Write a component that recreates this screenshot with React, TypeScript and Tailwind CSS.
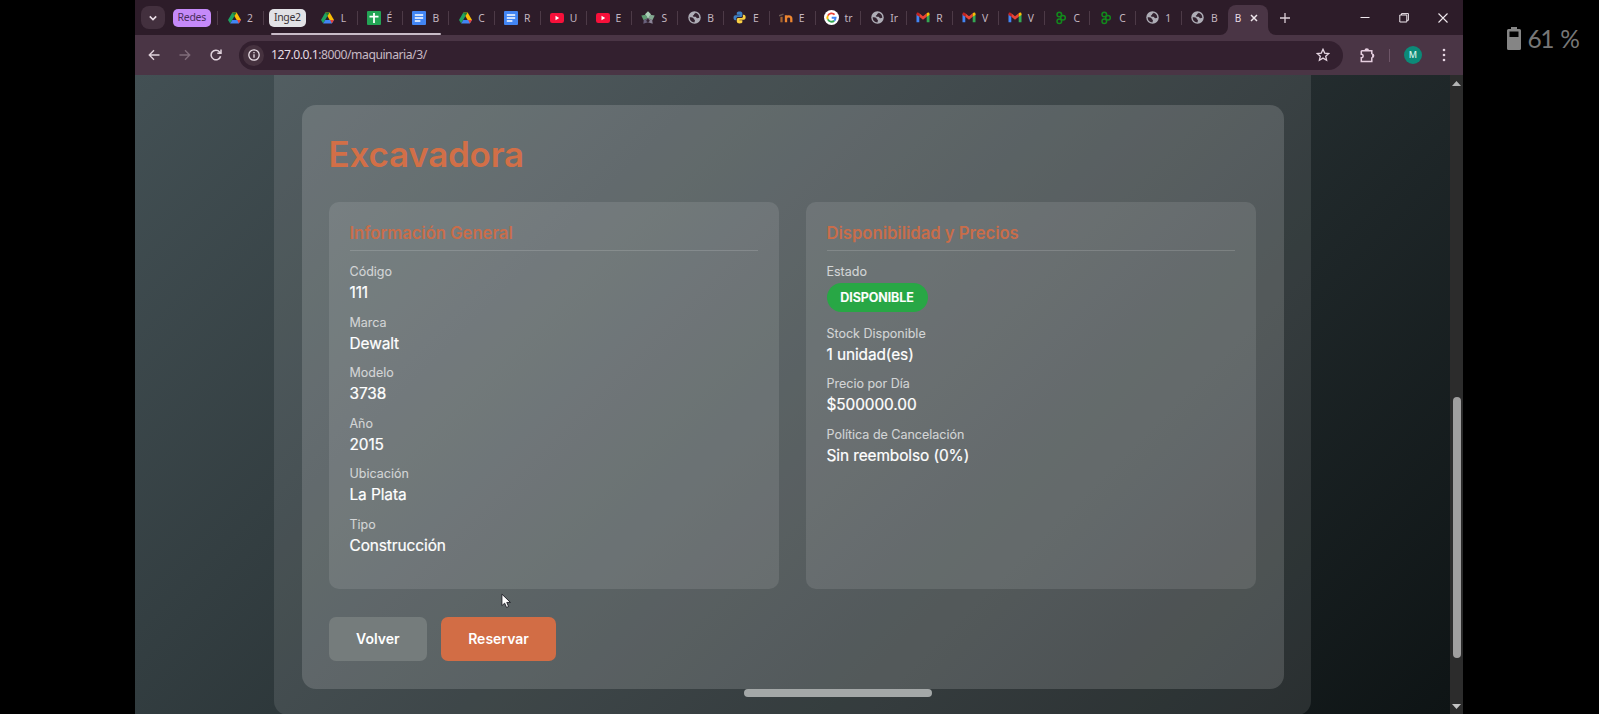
import React from "react";

type IconName =
  | "drive" | "sheets" | "docs" | "youtube" | "star" | "globe" | "python"
  | "moodle" | "google" | "gmail" | "knot";

function Favicon({ name }: { name: IconName }) {
  switch (name) {
    case "drive":
      return (
        <svg viewBox="0 0 24 22" className="h-[12px] w-[13px]">
          <path d="M8 1h8l8 13.5h-8z" fill="#fbbc04" />
          <path d="M8 1 0 14.500 4 21l8-13.500z" fill="#1ea362" />
          <path d="M8 14.500h16L20 21H4z" fill="#4285f4" />
          <path d="M24 14.500h-7L20 21z" fill="#ea4335" />
          <path d="M8 1h8l-4 6.500z" fill="#188038" />
        </svg>
      );
    case "sheets":
      return (
        <svg viewBox="0 0 14 14" className="h-[14px] w-[14px]">
          <rect width="14" height="14" rx="1" fill="#23a455" />
          <path d="M7 2v10M2.500 5.600h9" stroke="#fff" strokeWidth="1.800" />
        </svg>
      );
    case "docs":
      return (
        <svg viewBox="0 0 14 14" className="h-[14px] w-[14px]">
          <rect width="14" height="14" rx="1" fill="#4285f4" />
          <path d="M2.800 4h8.400M2.800 7h8.400M2.800 10h5.600" stroke="#fff" strokeWidth="1.400" />
        </svg>
      );
    case "youtube":
      return (
        <svg viewBox="0 0 14 10" className="h-[10px] w-[14px]">
          <rect width="14" height="10" rx="2.200" fill="#f8103a" />
          <path d="M5.500 2.800v4.400L9.200 5z" fill="#fff" />
        </svg>
      );
    case "star":
      return (
        <svg viewBox="0 0 14 14" className="h-[14px] w-[14px]">
          <path d="M7 .3 10 3.300 7.800 7H6.200L4 3.300z" fill="#a9cdb5" />
          <path d="M.3 4.600 4.800 3.800 6.800 7.200 2.600 9.300z" fill="#5f9a72" />
          <path d="M13.700 4.600 9.200 3.800 7.200 7.200l4.200 2.100z" fill="#82a890" />
          <path d="M2.300 12.800 2.800 9 7 7.200v4z" fill="#69617c" />
          <path d="M11.700 12.800 11.200 9 7 7.200v4z" fill="#8b8497" />
          <circle cx="7" cy="9.500" r="1.600" fill="#33222f" />
        </svg>
      );
    case "globe":
      return (
        <svg viewBox="0 0 14 14" className="h-[13px] w-[13px]">
          <circle cx="7" cy="7" r="6.700" fill="#aeadb6" />
          <path d="M1.800 6.800c1.800 0 4.200.2 4.400 1.600.1 1.200 1.300.6 1.300 1.900 0 .7-.6 1.200-.6 2-2.900 0-5.200-2.400-5.100-5.500zM8.300 2c-.2 1-1.800.8-1.800 1.800 0 .8-1.300.7-1.300 1.700 0 .9 1.600.7 2.800.7 1 0 .9 1.500 2 1.500.9 0 1.300-.5 2.200-.5C12 4.500 10.600 2.600 8.300 2z" fill="#33222f" />
        </svg>
      );
    case "python":
      return (
        <svg viewBox="0 0 24 24" className="h-[13px] w-[13px]">
          <path d="M12 1C7 1 7 3 7 4.500V7h5.500v1H4.500C2 8 1 10 1 12.500S2 17 4.500 17H6v-3c0-2 1.500-3 3.500-3h5c1.600 0 2.800-1.200 2.800-2.800V4.500C17.300 2 15 1 12 1z" fill="#3f7fc1" />
          <path d="M12.300 23c5 0 5-2 5-3.500V17h-5.500v-1h8c2.500 0 3.500-2 3.500-4.500S22.300 7 19.800 7h-1.500v3c0 2-1.500 3-3.500 3h-5C8.200 13 7 14.200 7 15.800v3.700C7 22 9.300 23 12.300 23z" fill="#fbd043" />
        </svg>
      );
    case "moodle":
      return (
        <svg viewBox="0 0 14 12" className="h-[12px] w-[14px]" fill="none">
          <path d="M0 3.800 4.500 2.200" stroke="#6b5a55" strokeWidth="1.400" />
          <path d="M2.500 10.300V4.800" stroke="#a8642f" strokeWidth="2.200" />
          <path d="M7 10.300V3.200M7 6.800c0-3.200 5.300-3.200 5.300 0v3.500" stroke="#ee8630" strokeWidth="2.300" />
        </svg>
      );
    case "google":
      return (
        <svg viewBox="0 0 16 16" className="h-[15px] w-[15px]" fill="none">
          <circle cx="8" cy="8" r="8" fill="#fff" />
          <path d="M11.300 5A4.400 4.400 0 0 0 4.100 6" stroke="#ea4335" strokeWidth="2" />
          <path d="M4.100 6a4.400 4.400 0 0 0 0 4" stroke="#fbbc05" strokeWidth="2" />
          <path d="M4.100 10a4.400 4.400 0 0 0 6.800 1.400" stroke="#34a853" strokeWidth="2" />
          <path d="M10.900 11.400A4.400 4.400 0 0 0 12.400 8.200H8.200" stroke="#4285f4" strokeWidth="2" />
        </svg>
      );
    case "gmail":
      return (
        <svg viewBox="0 0 14 11" className="h-[11px] w-[14px]">
          <path d="M.5 2v8.200h2.800V4z" fill="#4285f4" />
          <path d="M13.500 2v8.200h-2.800V4z" fill="#34a853" />
          <path d="M3.300 1.200 7 4.200l3.700-3v3.600L7 7.800 3.300 4.800z" fill="#ea4335" />
          <path d="M.5 2c0-1.600 1.600-1.900 2.800-.8v3.600L.5 2.900z" fill="#c5221f" />
          <path d="M13.500 2c0-1.600-1.600-1.900-2.800-.8v3.600l2.800-1.900z" fill="#fbbc04" />
        </svg>
      );
    case "knot":
      return (
        <svg viewBox="0 0 12 14" className="h-[14px] w-[12px]" fill="none" stroke="#128a1c" strokeWidth="1.500">
          <circle cx="4.300" cy="3.500" r="2.300" />
          <circle cx="8" cy="6.800" r="2.300" />
          <circle cx="4.300" cy="10.300" r="2.300" />
        </svg>
      );
  }
}

function Tab({ icon, label, divider = true }: { icon: IconName; label: string; divider?: boolean }) {
  return (
    <div className="flex h-full w-[45.800px] shrink-0 items-center">
      <span className={divider ? "h-[14px] w-px shrink-0 bg-[#4d3a47]" : "h-[14px] w-px shrink-0"} />
      <span className="ml-[8px] flex w-[16px] shrink-0 items-center justify-center">
        <Favicon name={icon} />
      </span>
      <span className="ml-[5px] whitespace-nowrap text-[10.300px] leading-[16px] text-[#c3b6c0]">
        {label}
      </span>
    </div>
  );
}

const tabs: { icon: IconName; label: string }[] = [
  { icon: "sheets", label: "É" },
  { icon: "docs", label: "B" },
  { icon: "drive", label: "C" },
  { icon: "docs", label: "R" },
  { icon: "youtube", label: "U" },
  { icon: "youtube", label: "E" },
  { icon: "star", label: "S" },
  { icon: "globe", label: "B" },
  { icon: "python", label: "E" },
  { icon: "moodle", label: "E" },
  { icon: "google", label: "tr" },
  { icon: "globe", label: "Ir" },
  { icon: "gmail", label: "R" },
  { icon: "gmail", label: "V" },
  { icon: "gmail", label: "V" },
  { icon: "knot", label: "C" },
  { icon: "knot", label: "C" },
  { icon: "globe", label: "1" },
  { icon: "globe", label: "B" },
];

function TabStrip() {
  return (
    <div className="relative flex h-[35px] shrink-0 items-center bg-[#2d1c29]">
      <button className="ml-[6px] flex h-[23px] w-[24px] shrink-0 items-center justify-center rounded-[8px] bg-[#43303e]">
        <svg viewBox="0 0 10 10" className="h-[10px] w-[10px]" fill="none" stroke="#eadfe7" strokeWidth="1.600">
          <path d="m1.800 3.400 3.200 3.200 3.200-3.200" />
        </svg>
      </button>
      <span className="ml-[7.500px] flex h-[18px] w-[38.500px] shrink-0 items-center justify-center rounded-[5px] bg-[#c58af9] text-[10.500px] tracking-[-0.3px] text-[#4a2f5e]">
        Redes
      </span>
      <div className="ml-[6px] flex h-full">
        <Tab icon="drive" label="2" />
      </div>
      <div className="flex h-full w-[48px] shrink-0 items-center">
        <span className="h-[14px] w-px bg-[#4d3a47]" />
        <span className="ml-[5px] flex h-[18px] w-[37px] items-center justify-center rounded-[5px] bg-[#e2e2e6] text-[10.500px] tracking-[-0.4px] text-[#3a3338]">
          Inge2
        </span>
      </div>
      <Tab icon="drive" label="L" divider={false} />
      {tabs.map((tab, i) => (
        <Tab key={i} icon={tab.icon} label={tab.label} />
      ))}
      <div className="relative ml-px flex h-[30px] w-[40px] shrink-0 items-center self-end rounded-t-[8px] bg-[#4a3545]">
        <svg viewBox="0 0 8 8" className="absolute -left-[8px] bottom-0 h-[8px] w-[8px]">
          <path d="M8 0v8H0a8 8 0 0 0 8-8z" fill="#4a3545" />
        </svg>
        <svg viewBox="0 0 8 8" className="absolute -right-[8px] bottom-0 h-[8px] w-[8px]">
          <path d="M0 0v8h8A8 8 0 0 1 0 0z" fill="#4a3545" />
        </svg>
        <span className="mb-[5px] ml-[7px] w-[8px] text-[10px] leading-[16px] text-[#e8dde5]">B</span>
        <svg viewBox="0 0 8 8" className="mb-[5px] ml-[7.500px] h-[8px] w-[8px]" stroke="#efe6ec" strokeWidth="1.500">
          <path d="m1 1 6 6M7 1 1 7" />
        </svg>
      </div>
      <svg viewBox="0 0 10 10" className="ml-[12.500px] h-[10px] w-[10px] shrink-0" stroke="#dccfd8" strokeWidth="1.300">
        <path d="M5 0v10M0 5h10" />
      </svg>
      <div className="ml-auto flex items-center gap-[29px] pr-[15px]">
        <svg viewBox="0 0 10 10" className="h-[10px] w-[10px]" stroke="#f0e8ee" strokeWidth="1">
          <path d="M.5 4.500h9" />
        </svg>
        <svg viewBox="0 0 10 10" className="h-[10px] w-[10px]" fill="none" stroke="#f0e8ee" strokeWidth="1">
          <path d="M.8 2h7v7h-7zM2.500 2V.6h6.900v6.700H7.800" />
        </svg>
        <svg viewBox="0 0 10 10" className="h-[10px] w-[10px]" stroke="#f0e8ee" strokeWidth="1.100">
          <path d="m.5.500 9 9M9.500.500l-9 9" />
        </svg>
      </div>
      <span className="absolute left-[136px] top-[33px] h-[2px] w-[170px] rounded-full bg-[#c9bcc8]" />
    </div>
  );
}

function Toolbar() {
  return (
    <div className="flex h-[40px] shrink-0 items-center bg-[#4a3545]">
      <svg viewBox="0 0 12 12" className="ml-[13px] h-[12px] w-[12px] shrink-0" fill="none" stroke="#e0d2dc" strokeWidth="1.400">
        <path d="M11.500 6H1.500M6 1.300 1.300 6 6 10.700" />
      </svg>
      <svg viewBox="0 0 12 12" className="ml-[19px] h-[12px] w-[12px] shrink-0" fill="none" stroke="#806c7a" strokeWidth="1.400">
        <path d="M.5 6h10M6 1.300 10.700 6 6 10.700" />
      </svg>
      <svg viewBox="0 0 12 12" className="ml-[19px] h-[12px] w-[12px] shrink-0" fill="none" stroke="#e0d2dc" strokeWidth="1.500">
        <path d="M10.600 7.200A4.800 4.800 0 1 1 9.600 2.900L10.800 4.200M11 .6v3.700H7.300" />
      </svg>
      <div className="ml-[17px] flex h-[29px] w-[1104px] shrink-0 items-center rounded-full bg-[#33202f]">
        <span className="ml-[4px] flex h-[21px] w-[21px] items-center justify-center rounded-full bg-[#46323f]">
          <svg viewBox="0 0 12 12" className="h-[12px] w-[12px]" fill="none" stroke="#eadfe7" strokeWidth="1.300">
            <circle cx="6" cy="6" r="5.200" />
            <path d="M6 5.300v3.500M6 3v1.300" />
          </svg>
        </span>
        <span className="ml-[7px] pt-px text-[12.200px] tracking-[-0.480px] text-[#c7bac4]">
          <span className="text-[#e6dbe3]">127.0.0.1</span>:8000/maquinaria/3/
        </span>
        <svg viewBox="0 0 14 14" className="ml-auto mr-[13px] h-[14px] w-[14px]" fill="none" stroke="#e6d6e2" strokeWidth="1.300">
          <path d="m7 1.300 1.700 3.800 4.100.4-3.100 2.700.9 4L7 10.100l-3.600 2.100.9-4L1.200 5.500l4.100-.4z" />
        </svg>
      </div>
      <svg viewBox="0 0 15 15" className="ml-[17px] h-[15px] w-[15px] shrink-0" fill="none" stroke="#e6cfe0" strokeWidth="1.500">
        <path d="M1.300 2.800h10.500v3.400M11.800 9.300v4.200H1.300V9.700c2.400.2 2.400-3.600 0-3.400V2.800" />
        <path d="M5.200 2.500c0-2 3.100-2 3.100 0M12.100 6.200c2 0 2 3.100 0 3.100" fill="#e6cfe0" />
      </svg>
      <span className="ml-[14px] h-[13px] w-px bg-[#6d5567]" />
      <span className="ml-[14px] flex h-[18px] w-[18px] items-center justify-center rounded-full bg-[#0c8a78] text-[9px] font-medium text-[#d9f2ec]">
        M
      </span>
      <svg viewBox="0 0 4 14" className="ml-[20px] h-[14px] w-[4px]" fill="#e6d6e2">
        <circle cx="2" cy="2" r="1.300" />
        <circle cx="2" cy="7" r="1.300" />
        <circle cx="2" cy="12" r="1.300" />
      </svg>
    </div>
  );
}

function Field({ label, children }: { label: string; children: React.ReactNode }) {
  return (
    <div className="mb-[9.100px]">
      <div className="text-[12.500px] leading-[20px] text-[#d3d5d6] [-webkit-text-stroke:0.1px_#d3d5d6]">{label}</div>
      <div className="text-[15.400px] leading-[21.500px] tracking-[-0.080px] text-white [-webkit-text-stroke:0.2px_#fff]">{children}</div>
    </div>
  );
}

function Panel({ title, children }: { title: string; children: React.ReactNode }) {
  return (
    <section className="h-[387px] flex-1 rounded-[10px] bg-white/10 px-[21px] pt-[20px]">
      <h2 className="mb-[11px] h-[29px] border-b border-white/15 text-[16.700px] font-semibold leading-[23px] tracking-[-0.040px] text-[#c96d4a]">
        {title}
      </h2>
      {children}
    </section>
  );
}

function Page() {
  return (
    <div className="relative flex min-h-0 flex-1">
      <main className="flex flex-1 justify-center overflow-hidden bg-linear-[135deg,#435054,#0e1415] pr-px font-['Inter',sans-serif]">
        <div className="h-[640px] w-[1037px] shrink-0 rounded-b-[14px] bg-white/10 pl-[28px] pr-[27px] pt-[30px]">
          <article className="h-[584px] rounded-[14px] bg-white/15 px-[27px] pt-[27px]">
            <h1 className="mb-[26px] h-[44px] text-[35px] font-semibold leading-[45px] tracking-[-0.240px] text-[#d26f47]">Excavadora</h1>
            <div className="flex gap-[27px] pr-px">
              <Panel title="Información General">
                <Field label="Código">111</Field>
                <Field label="Marca">Dewalt</Field>
                <Field label="Modelo">3738</Field>
                <Field label="Año">2015</Field>
                <Field label="Ubicación">La Plata</Field>
                <Field label="Tipo">Construcción</Field>
              </Panel>
              <Panel title="Disponibilidad y Precios">
                <Field label="Estado">
                  <span className="mb-[11.500px] mt-[1px] flex h-[29px] w-[101px] items-center justify-center rounded-full bg-[#28a745] text-[12.500px] font-semibold">
                    DISPONIBLE
                  </span>
                </Field>
                <Field label="Stock Disponible">1 unidad(es)</Field>
                <Field label="Precio por Día">$500000.00</Field>
                <Field label="Política de Cancelación">Sin reembolso (0%)</Field>
              </Panel>
            </div>
            <div className="mt-[28px] flex gap-[14px] text-[14px] font-semibold text-white">
              <button className="h-[44px] w-[98.500px] rounded-[7px] bg-[#757c7c] pb-[1px]">Volver</button>
              <button className="h-[44px] w-[115px] rounded-[7px] bg-[#d26d45] pb-[1px]">Reservar</button>
            </div>
          </article>
        </div>
      </main>
      <div className="flex w-[13px] shrink-0 flex-col items-center bg-[#2c2c2c]">
        <svg viewBox="0 0 9 5" className="mt-[6px] h-[5px] w-[9px]" fill="#b5b5b5">
          <path d="M0 5 4.500 0 9 5z" />
        </svg>
        <span className="mt-[311px] h-[261px] w-[8px] rounded-full bg-[#a09f9f]" />
        <svg viewBox="0 0 9 5" className="mt-auto mb-[5px] h-[5px] w-[9px]" fill="#c5c5c5">
          <path d="M0 0h9L4.500 5z" />
        </svg>
      </div>
      <svg viewBox="0 0 12 18" className="absolute left-[366px] top-[518px] h-[17px] w-[11px]">
        <path d="M1 1v12.500l3-2.700 2 4.700 2.300-1-2-4.500h4z" fill="#fff" stroke="#1d1d24" strokeWidth="1" />
      </svg>
      <span className="absolute left-[609px] top-[614px] h-[8px] w-[188px] rounded-full bg-[#a4a8a8]" />
    </div>
  );
}

export default function App() {
  return (
    <div className="flex h-[714px] w-[1599px] overflow-hidden bg-black font-['Noto_Sans',sans-serif]">
      <div className="ml-[135px] flex w-[1328px] shrink-0 flex-col">
        <TabStrip />
        <Toolbar />
        <Page />
      </div>
      <div className="ml-[43.500px] mt-[23.500px] flex h-[30px] items-center text-[#777777]">
        <svg viewBox="0 0 14 23" className="h-[23px] w-[14px]" fill="#858585">
          <path
            fillRule="evenodd"
            d="M4 0h6v2h2.500q1.500 0 1.500 1.500v18q0 1.500-1.500 1.500h-11Q0 23 0 21.500v-18Q0 2 1.500 2H4zM2.500 4.500V10h9V4.500z"
          />
        </svg>
        <span className="ml-[7px] whitespace-nowrap font-['Lato',sans-serif] text-[24.500px] leading-[30px] tracking-[-1.500px] [word-spacing:2.500px]">61 %</span>
      </div>
    </div>
  );
}
